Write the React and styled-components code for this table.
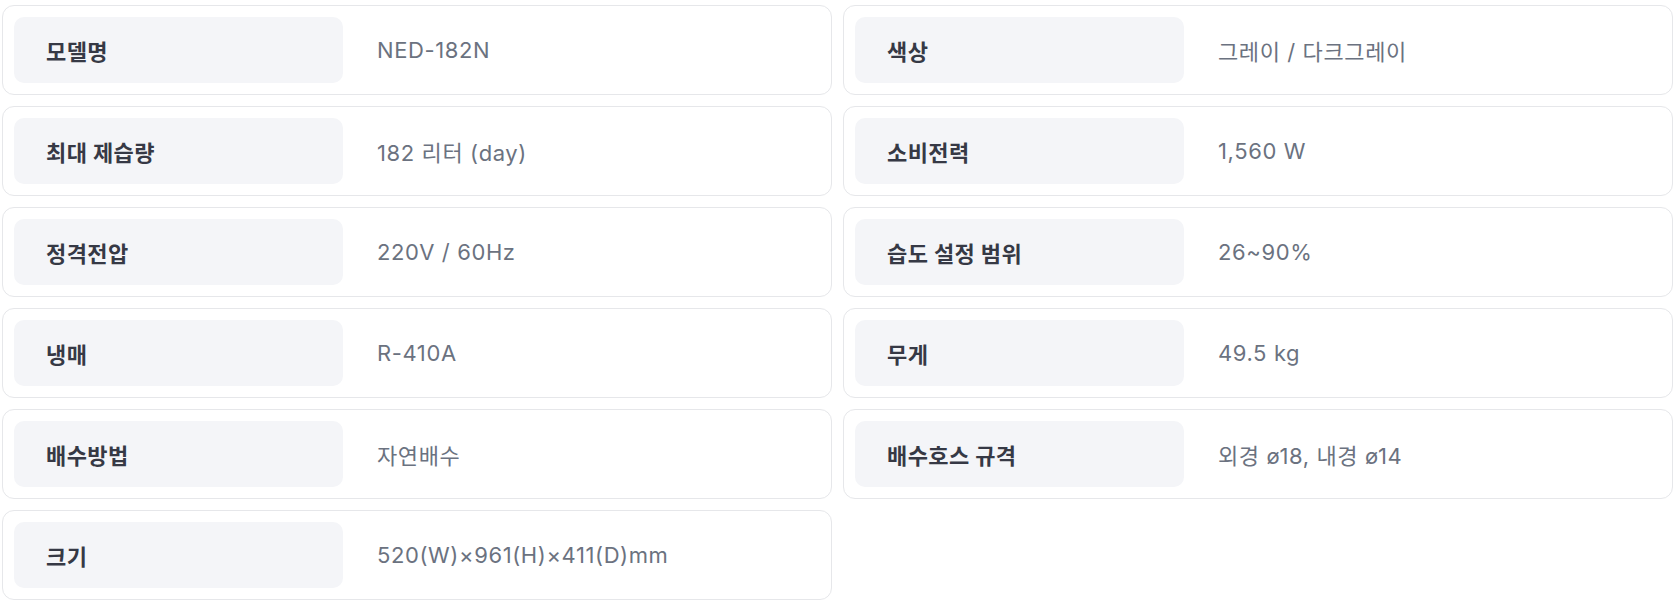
import React from "react";
import styled, { createGlobalStyle } from "styled-components";

const specs = [
  { label: "모델명", value: "NED-182N" },
  { label: "색상", value: "그레이 / 다크그레이" },
  { label: "최대 제습량", value: "182 리터 (day)" },
  { label: "소비전력", value: "1,560 W" },
  { label: "정격전압", value: "220V / 60Hz" },
  { label: "습도 설정 범위", value: "26~90%" },
  { label: "냉매", value: "R-410A" },
  { label: "무게", value: "49.5 kg" },
  { label: "배수방법", value: "자연배수" },
  { label: "배수호스 규격", value: "외경 ø18, 내경 ø14" },
  { label: "크기", value: "520(W)×961(H)×411(D)mm" }
];

const GlobalStyle = createGlobalStyle`
  body {
    margin: 0;
    background: #ffffff;
    font-family: Inter, "Noto Sans CJK KR", sans-serif;
  }
`;

const Grid = styled.div`
  display: grid;
  grid-template-columns: 1fr 1fr;
  column-gap: 11px;
  row-gap: 11px;
  padding: 5px 2px 0 2px;
`;

const Card = styled.div`
  display: flex;
  align-items: center;
  gap: 34px;
  padding: 11px;
  border: 1px solid #e6e7ea;
  border-radius: 12px;
  background: #ffffff;
`;

const Label = styled.div`
  flex: 0 0 329px;
  height: 66px;
  box-sizing: border-box;
  display: flex;
  align-items: center;
  padding-left: 32px;
  border-radius: 10px;
  background: #f4f5f8;
  color: #363945;
  font-size: 22px;
  font-weight: 700;
  letter-spacing: 0.4px;
`;

const Value = styled.div`
  color: #6b7280;
  font-size: 22px;
  font-weight: 400;
  letter-spacing: 0.6px;
`;

export default function App() {
  return (
    <>
      <GlobalStyle />
      <Grid>
        {specs.map(spec => (
          <Card key={spec.label}>
            <Label>{spec.label}</Label>
            <Value>{spec.value}</Value>
          </Card>
        ))}
      </Grid>
    </>
  );
}
